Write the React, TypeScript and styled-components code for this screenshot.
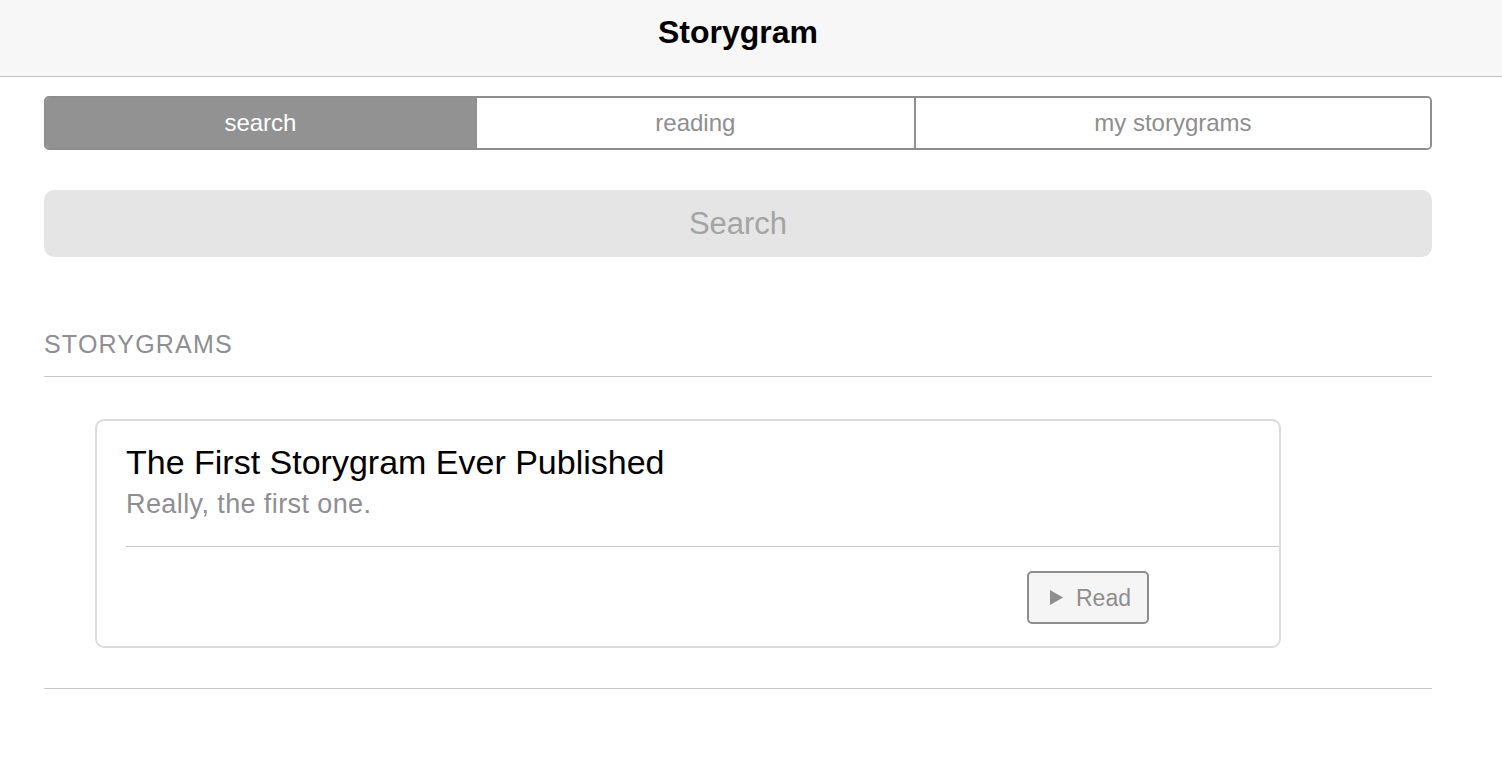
import styled, { createGlobalStyle } from "styled-components";

const GlobalStyle = createGlobalStyle`
  body {
    margin: 0;
    background: #fff;
    font-family: "Liberation Sans", Arial, sans-serif;
  }
`;

const Header = styled.header`
  height: 77px;
  box-sizing: border-box;
  display: flex;
  justify-content: center;
  align-items: flex-start;
  padding: 14px 26px 0 0;
  background: #f7f7f7;
  border-bottom: 1px solid #c2c2c2;

  h1 {
    margin: 0;
    font-size: 32px;
    line-height: 36px;
    font-weight: 700;
    color: #000;
  }
`;

const Content = styled.main`
  width: 1388px;
  margin-left: 44px;
  padding-top: 19px;
`;

const SegmentBar = styled.div`
  display: flex;
  height: 54px;
  box-sizing: border-box;
  border: 2px solid #8e8e8e;
  border-radius: 5px;
  overflow: hidden;
`;

const Segment = styled.button<{ $active?: boolean }>`
  flex: 1 1 auto;
  padding: 0;
  margin: 0;
  border: none;
  border-right: 2px solid #8e8e8e;
  background: ${(p) => (p.$active ? "#929292" : "#fff")};
  color: ${(p) => (p.$active ? "#fff" : "#8e8e8e")};
  font-family: inherit;
  font-size: 24px;
  line-height: 28px;

  &:last-child {
    border-right: none;
  }
`;

const SearchInput = styled.input`
  display: block;
  width: 100%;
  height: 67px;
  box-sizing: border-box;
  margin-top: 40px;
  border: none;
  border-radius: 10px;
  background: #e5e5e5;
  text-align: center;
  font-family: inherit;
  font-size: 31px;
  line-height: 36px;
  outline: none;

  &::placeholder {
    color: #a4a4a4;
  }
`;

const SectionTitle = styled.h2`
  margin: 73px 0 0;
  padding-bottom: 18px;
  border-bottom: 1px solid #c8c7cc;
  font-size: 25px;
  line-height: 28px;
  font-weight: 400;
  letter-spacing: 1.2px;
  color: #8e8e93;
`;

const Card = styled.article`
  width: 1186px;
  box-sizing: border-box;
  margin: 42px 0 0 51px;
  border: 2px solid #dcdcdc;
  border-radius: 9px;
`;

const CardBody = styled.div`
  margin-left: 29px;
  padding: 21px 0 27px;
  border-bottom: 1px solid #c8c7cc;

  h3 {
    margin: 0;
    font-size: 34px;
    line-height: 40px;
    font-weight: 400;
    color: #000;
  }

  p {
    margin: 7px 0 0;
    font-size: 27px;
    line-height: 30px;
    letter-spacing: 0.4px;
    color: #8e8e93;
  }
`;

const CardFooter = styled.div`
  display: flex;
  justify-content: flex-end;
  padding: 24px 130px 22px 0;
`;

const ReadButton = styled.button`
  display: flex;
  align-items: center;
  gap: 13px;
  width: 122px;
  height: 53px;
  box-sizing: border-box;
  padding: 0 0 0 21px;
  border: 2px solid #8e8e8e;
  border-radius: 5px;
  background: #f5f5f5;
  color: #8e8e8e;
  font-family: inherit;
  font-size: 23px;
  line-height: 28px;

  svg {
    flex: none;
  }
`;

const Rule = styled.hr`
  margin: 40px 0 0;
  border: none;
  border-top: 1px solid #c8c7cc;
`;

const tabs = ["search", "reading", "my storygrams"];

export default function App() {
  return (
    <>
      <GlobalStyle />
      <Header>
        <h1>Storygram</h1>
      </Header>
      <Content>
        <SegmentBar>
          {tabs.map((t) => (
            <Segment key={t} $active={t === "search"}>
              {t}
            </Segment>
          ))}
        </SegmentBar>
        <SearchInput placeholder="Search" />
        <SectionTitle>STORYGRAMS</SectionTitle>
        <Card>
          <CardBody>
            <h3>The First Storygram Ever Published</h3>
            <p>Really, the first one.</p>
          </CardBody>
          <CardFooter>
            <ReadButton>
              <svg width="13" height="15" viewBox="0 0 13 15">
                <path d="M0 0 L13 7.5 L0 15 Z" fill="#8e8e8e" />
              </svg>
              Read
            </ReadButton>
          </CardFooter>
        </Card>
        <Rule />
      </Content>
    </>
  );
}
